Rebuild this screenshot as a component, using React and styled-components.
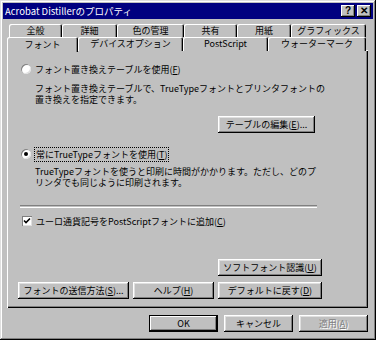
import React from 'react';
import styled, { createGlobalStyle } from 'styled-components';

const GlobalStyle = createGlobalStyle`
  html, body {
    margin: 0;
    padding: 0;
    background: #c0c0c0;
  }
  body {
    font-family: "Noto Sans CJK JP", "Liberation Sans", sans-serif;
    font-size: 9px;
    color: #000;
  }
`;

const Window = styled.div`
  box-sizing: border-box;
  width: 376px;
  height: 340px;
  padding: 3px;
  background: #c0c0c0;
  box-shadow: inset -1px -1px #000, inset 1px 1px #dfdfdf,
    inset -2px -2px #808080, inset 2px 2px #fff;
  display: flex;
  flex-direction: column;
`;

const TitleBar = styled.div`
  height: 16px;
  background: #000080;
  color: #fff;
  display: flex;
  align-items: center;
  padding: 0 2px;
  font-size: 9.5px;
`;

const TitleText = styled.span`
  flex: 1;
  white-space: nowrap;
`;

const TitleButton = styled.span`
  width: 14px;
  height: 12px;
  margin-left: ${p => (p.$gap ? '2px' : '0')};
  background: #c0c0c0;
  color: #000;
  font-family: "Liberation Sans", sans-serif;
  font-weight: bold;
  font-size: 10px;
  line-height: 12px;
  text-align: center;
  box-shadow: inset -1px -1px #000, inset 1px 1px #fff, inset -2px -2px #808080;
`;

const Content = styled.div`
  flex: 1;
  display: flex;
  flex-direction: column;
  padding: 5px 5px 0 4px;
`;

const TabRow = styled.div`
  display: flex;
  height: ${p => p.$height}px;
  padding-left: ${p => p.$indent}px;
  position: relative;
  z-index: ${p => p.$z};
`;

const Tab = styled.div`
  box-sizing: border-box;
  width: ${p => p.$w}px;
  height: ${p => (p.$active ? p.$h + 1 : p.$h)}px;
  display: flex;
  align-items: center;
  justify-content: center;
  white-space: nowrap;
  background: #c0c0c0;
  border-top-left-radius: 2px;
  border-top-right-radius: 2px;
  box-shadow: inset 1px 1px #fff, inset -1px 0 #000, inset -2px 0 #808080;
  padding-bottom: 1px;
`;

const Panel = styled.div`
  box-sizing: border-box;
  height: 258px;
  margin-top: -1px;
  background: #c0c0c0;
  box-shadow: inset 1px 1px #fff, inset -1px -1px #000, inset -2px -2px #808080;
  display: flex;
  flex-direction: column;
  align-items: flex-start;
`;

const OptionRow = styled.label`
  display: flex;
  align-items: center;
  height: 12px;
  margin: ${p => p.$mt}px 0 0 14px;
  white-space: nowrap;
`;

const Radio = styled.span`
  box-sizing: border-box;
  width: 10px;
  height: 10px;
  border-radius: 50%;
  background: #fff;
  margin-right: 4px;
  box-shadow: inset 1px 1px #808080, inset -1px -1px #dfdfdf;
  display: flex;
  align-items: center;
  justify-content: center;
  &::after {
    content: '';
    display: ${p => (p.$checked ? 'block' : 'none')};
    width: 4px;
    height: 4px;
    border-radius: 50%;
    background: #000;
  }
`;

const Check = styled.span`
  box-sizing: border-box;
  width: 10px;
  height: 10px;
  margin: 0 4px 0 1px;
  background: #fff;
  box-shadow: inset 1px 1px #808080, inset -1px -1px #dfdfdf;
  display: flex;
  align-items: center;
  justify-content: center;
`;

const Focus = styled.span`
  outline: 1px dotted #000;
  outline-offset: 0;
  padding: 0 1px;
`;

const Desc = styled.p`
  margin: ${p => p.$mt}px 0 0 28px;
  line-height: 11px;
  white-space: nowrap;
`;

const Separator = styled.div`
  width: 297px;
  height: 1px;
  margin: 17px 0 0 13px;
  border-top: 1px solid #808080;
  border-bottom: 1px solid #fff;
`;

const Button = styled.div`
  box-sizing: border-box;
  width: ${p => p.$w}px;
  height: 17px;
  margin: ${p => p.$m || '0'};
  display: flex;
  align-items: center;
  justify-content: center;
  white-space: nowrap;
  background: #c0c0c0;
  color: ${p => (p.$disabled ? '#808080' : '#000')};
  text-shadow: ${p => (p.$disabled ? '1px 1px #fff' : 'none')};
  box-shadow: ${p =>
    p.$default
      ? 'inset 0 0 0 1px #000, inset -2px -2px #000, inset 2px 2px #fff, inset -3px -3px #808080'
      : 'inset -1px -1px #000, inset 1px 1px #fff, inset -2px -2px #808080, inset 2px 2px #dfdfdf'};
`;

const ButtonRow = styled.div`
  display: flex;
  gap: 4px;
  margin: 6px 0 0 11px;
`;

const Footer = styled.div`
  display: flex;
  justify-content: flex-end;
  gap: 6px;
  margin-top: 7px;
`;

const rowOne = [
  { label: '全般', w: 53 },
  { label: '詳細', w: 55 },
  { label: '色の管理', w: 67 },
  { label: '共有', w: 53 },
  { label: '用紙', w: 54 },
  { label: 'グラフィックス', w: 75 },
];

const rowTwo = [
  { label: 'フォント', w: 71, active: true },
  { label: 'デバイスオプション', w: 105 },
  { label: 'PostScript', w: 85 },
  { label: 'ウォーターマーク', w: 98 },
];

function Key({ k }) {
  return (
    <>
      (<u>{k}</u>)
    </>
  );
}

export default function App() {
  return (
    <>
      <GlobalStyle />
      <Window>
        <TitleBar>
          <TitleText>Acrobat Distillerのプロパティ</TitleText>
          <TitleButton>?</TitleButton>
          <TitleButton $gap>✕</TitleButton>
        </TitleBar>
        <Content>
          <TabRow $height={13} $indent={2} $z={1}>
            {rowOne.map(t => (
              <Tab key={t.label} $w={t.w} $h={13}>{t.label}</Tab>
            ))}
          </TabRow>
          <TabRow $height={14} $indent={0} $z={2}>
            {rowTwo.map(t => (
              <Tab key={t.label} $w={t.w} $h={14} $active={t.active}>{t.label}</Tab>
            ))}
          </TabRow>
          <Panel>
            <OptionRow $mt={13}>
              <Radio />
              フォント置き換えテーブルを使用<Key k="F" />
            </OptionRow>
            <Desc $mt={8}>
              フォント置き換えテーブルで、TrueTypeフォントとプリンタフォントの<br />
              置き換えを指定できます。
            </Desc>
            <Button $w={97} $m="11px 0 0 211px">テーブルの編集<Key k="E" />...</Button>
            <OptionRow $mt={15}>
              <Radio $checked />
              <Focus>常にTrueTypeフォントを使用<Key k="T" /></Focus>
            </OptionRow>
            <Desc $mt={6}>
              TrueTypeフォントを使うと印刷に時間がかかります。ただし、どのプ<br />
              リンタでも同じように印刷されます。
            </Desc>
            <Separator />
            <OptionRow $mt={7}>
              <Check>
                <svg width="8" height="8" viewBox="0 0 8 8">
                  <path d="M1 3.5 L3 5.5 L7 1.5" stroke="#000" strokeWidth="1.6" fill="none" />
                </svg>
              </Check>
              ユーロ通貨記号をPostScriptフォントに追加<Key k="C" />
            </OptionRow>
            <Button $w={104} $m="32px 0 0 211px">ソフトフォント認識<Key k="U" /></Button>
            <ButtonRow>
              <Button $w={111}>フォントの送信方法<Key k="S" />...</Button>
              <Button $w={81}>ヘルプ<Key k="H" /></Button>
              <Button $w={104}>デフォルトに戻す<Key k="D" /></Button>
            </ButtonRow>
          </Panel>
          <Footer>
            <Button $w={69} $default>OK</Button>
            <Button $w={69}>キャンセル</Button>
            <Button $w={69} $disabled>適用<Key k="A" /></Button>
          </Footer>
        </Content>
      </Window>
    </>
  );
}
